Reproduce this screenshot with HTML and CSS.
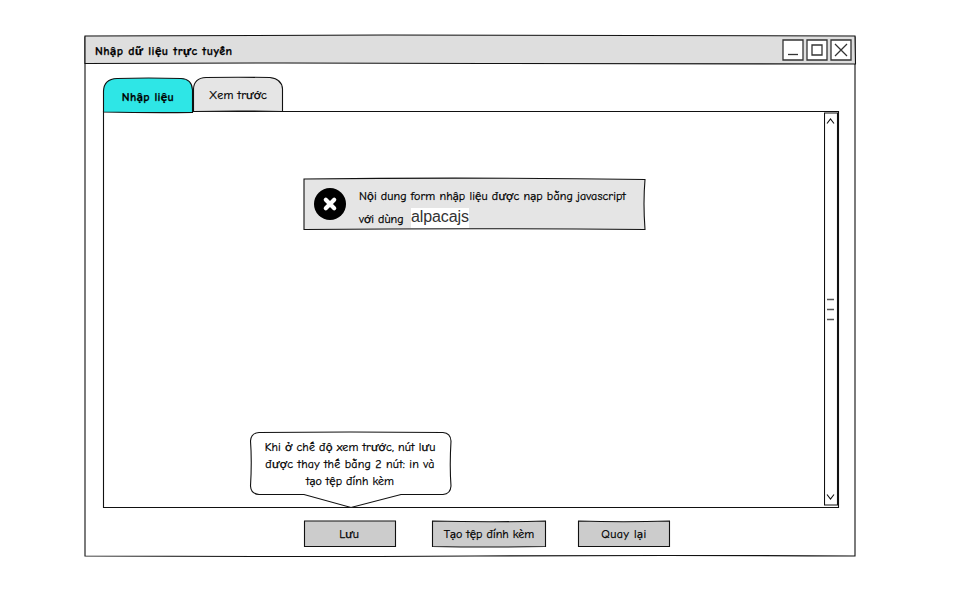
FILE: index.html
```html
<!DOCTYPE html>
<html lang="vi">
<head>
<meta charset="utf-8">
<title>Nhập dữ liệu trực tuyến</title>
<link rel="stylesheet" href="styles.css">
</head>
<body>
<main class="window">
  <svg class="sketch" viewBox="0 0 771 522"><path d="M0 1.5V521Q200 522 390 521T770 521Q769.5 260 770 1.5"/></svg>
  <header class="titlebar">
    <svg class="sketch" viewBox="0 0 771 30"><path class="fill-title" d="M0 1Q100 0 300 0T770 1L770.5 29Q600 29.5 400 28.5T0 28.5Z"/></svg>
    <h1 class="title">Nhập dữ liệu trực tuyến</h1>
    <div class="controls">
      <svg viewBox="0 0 22 22"><path class="fill-white" d="M1 1H21V21H1Z"/><path d="M6 15.5H16"/></svg>
      <svg viewBox="0 0 22 22"><path class="fill-white" d="M1 1H21V21H1Z"/><path d="M6 6H16V16H6Z"/></svg>
      <svg viewBox="0 0 22 22"><path class="fill-white" d="M1 1H21V21H1Z"/><path d="M5 5L17 17M17 5L5 17"/></svg>
    </div>
  </header>
  <nav class="tabs">
    <div class="tab active">
      <svg class="sketch" viewBox="0 0 90 36"><path class="fill-cyan" d="M.5 35V14Q1 2 14 1.5Q45 .5 78 1.5Q89 2 89.5 13V35.5Q45 36 .5 35Z"/></svg>
      <span>Nhập liệu</span>
    </div>
    <div class="tab">
      <svg class="sketch" viewBox="0 0 90 36"><path class="fill-light" d="M.5 34.5V12Q1 1 13 .5Q45 0 77 .5Q89 2 89.5 12V34.5Q45 33.5 .5 34.5Z"/></svg>
      <span>Xem trước</span>
    </div>
  </nav>
  <section class="panel">
    <svg class="sketch" viewBox="0 0 736 398"><path d="M.5 1.5Q370 0 735.5 1.5V397.5H.5Z"/></svg>
    <div class="message">
      <svg class="sketch" viewBox="0 0 343 53"><path class="fill-light" d="M1 2Q170 0 342 2.5Q340 26 342 52.5Q170 51 1 52.5Z"/></svg>
      <svg class="error-icon" viewBox="0 0 32 32"><circle cx="16" cy="16" r="16"/><path d="M11.8 11.8L20.2 20.2M20.2 11.8L11.8 20.2"/></svg>
      <p class="message-text"><span class="line first">Nội dung form nhập liệu được nạp bằng javascript</span><span class="line second"><span class="with">với dùng</span><mark>alpacajs</mark></span></p>
    </div>
    <svg class="scrollbar" viewBox="0 0 14 393"><path class="fill-white" d="M.5 .5H13.5V392.5H.5Z"/><path d="M3 11L6.5 6.5L10 11M3 382L6.5 386.5L10 382"/><path class="grip" d="M3 187H10M3 197H10M3 207H10"/></svg>
    <aside class="callout">
      <svg class="sketch" viewBox="0 0 202 77"><path class="fill-white" d="M9 1.5Q100 .5 193 1.5Q200.5 2 201 10Q199.5 35 201 55Q200.5 63 193 63.5H151L101 76.5L54 63.5H9Q1 63 .5 55Q2 30 .5 10Q1 2 9 1.5Z"/></svg>
      <span class="c1">Khi ở chế độ xem trước, nút lưu</span>
      <span class="c2">được thay thế bằng 2 nút: in và</span>
      <span class="c3">tạo tệp đính kèm</span>
    </aside>
  </section>
  <footer class="actions">
    <button class="button save"><svg class="sketch" viewBox="0 0 92 28"><path class="fill-button" d="M.5 1H91.5V26.5H.5Z"/></svg><span>Lưu</span></button>
    <button class="button attach"><svg class="sketch" viewBox="0 0 114 28"><path class="fill-button" d="M.5 1Q60 2.5 113.5 1V26.5Q57 27.5 .5 26.5Z"/></svg><span>Tạo tệp đính kèm</span></button>
    <button class="button back"><svg class="sketch" viewBox="0 0 92 28"><path class="fill-button" d="M.5 1Q45 2.5 91.5 1V26.5H.5Z"/></svg><span>Quay lại</span></button>
  </footer>
</main>
</body>
</html>
```
FILE: styles.css
```css
* { box-sizing: border-box; }
body { margin: 0; width: 960px; height: 600px; overflow: hidden; background: #fff; color: #000; font: 12px/17px "Comic Neue", Lato, "Noto Sans", sans-serif; white-space: nowrap; -webkit-text-stroke: .25px #000; }
svg { display: block; fill: none; stroke: #111; stroke-width: 1.1; }
.sketch { position: absolute; inset: 0; width: 100%; height: 100%; z-index: -1; overflow: visible; }
.fill-title { fill: #dedede; }
.fill-white { fill: #fff; }
.fill-cyan { fill: #2ee6e6; }
.fill-light { fill: #e5e5e5; }
.fill-button { fill: #ccc; }
.window { position: relative; isolation: isolate; width: 771px; height: 522px; margin: 35px 0 0 85px; }
.titlebar { position: relative; isolation: isolate; height: 30px; display: flex; justify-content: space-between; padding: 4px 4px 0 10px; }
.title { margin: 4px 0 0; font-size: 12px; line-height: 17px; font-weight: 900; letter-spacing: .48px; }
.controls { display: flex; gap: 2px; }
.controls svg { width: 22px; height: 22px; stroke: #333; stroke-width: 1.3; }
.tabs { display: flex; padding: 12px 0 0 18px; height: 46px; }
.tab { position: relative; isolation: isolate; width: 90px; height: 36px; padding-top: 10px; text-align: center; letter-spacing: .1px; }
.tab.active { padding-top: 12px; font-weight: 900; letter-spacing: .35px; z-index: 1; }
.panel { position: relative; width: 736px; height: 398px; margin: -1px 0 0 18px; display: grid; grid-template-columns: 1fr 14px; padding: 2px 1px 0 0; }
.message { position: relative; isolation: isolate; width: 343px; height: 53px; margin: 65px 0 0 200px; display: flex; padding: 11px 0 0 11px; }
.error-icon { width: 32px; height: 32px; stroke: #fff; stroke-width: 4.2; stroke-linecap: round; }
.error-icon circle { fill: #000; stroke: none; }
.message-text { margin: 0 0 0 13px; }
.line { display: block; }
.first { letter-spacing: .1px; }
.second { display: flex; gap: 8px; padding-top: 3px; }
.with { padding-top: 3px; width: 44px; }
mark { background: #fff; color: #333; font: 16px/18px "Liberation Sans", Arial, sans-serif; -webkit-text-stroke: 0; letter-spacing: -.1px; }
.scrollbar { width: 14px; height: 394px; }
.grip { stroke: #555; stroke-width: 1.5; }
.callout { position: absolute; isolation: isolate; left: 147px; top: 321px; width: 202px; height: 77px; display: flex; flex-direction: column; align-items: center; padding: 8px 2px 0 0; }
.c1 { letter-spacing: .1px; }
.c2 { letter-spacing: .2px; }
.actions { display: flex; padding: 12px 0 0 219px; }
.button { position: relative; isolation: isolate; width: 92px; height: 28px; padding: 0; border: 0; background: none; color: inherit; font: inherit; }
.save { padding-right: 2px; }
.attach { width: 114px; margin: 0 32px 0 36px; }
.back { letter-spacing: .5px; }
```
